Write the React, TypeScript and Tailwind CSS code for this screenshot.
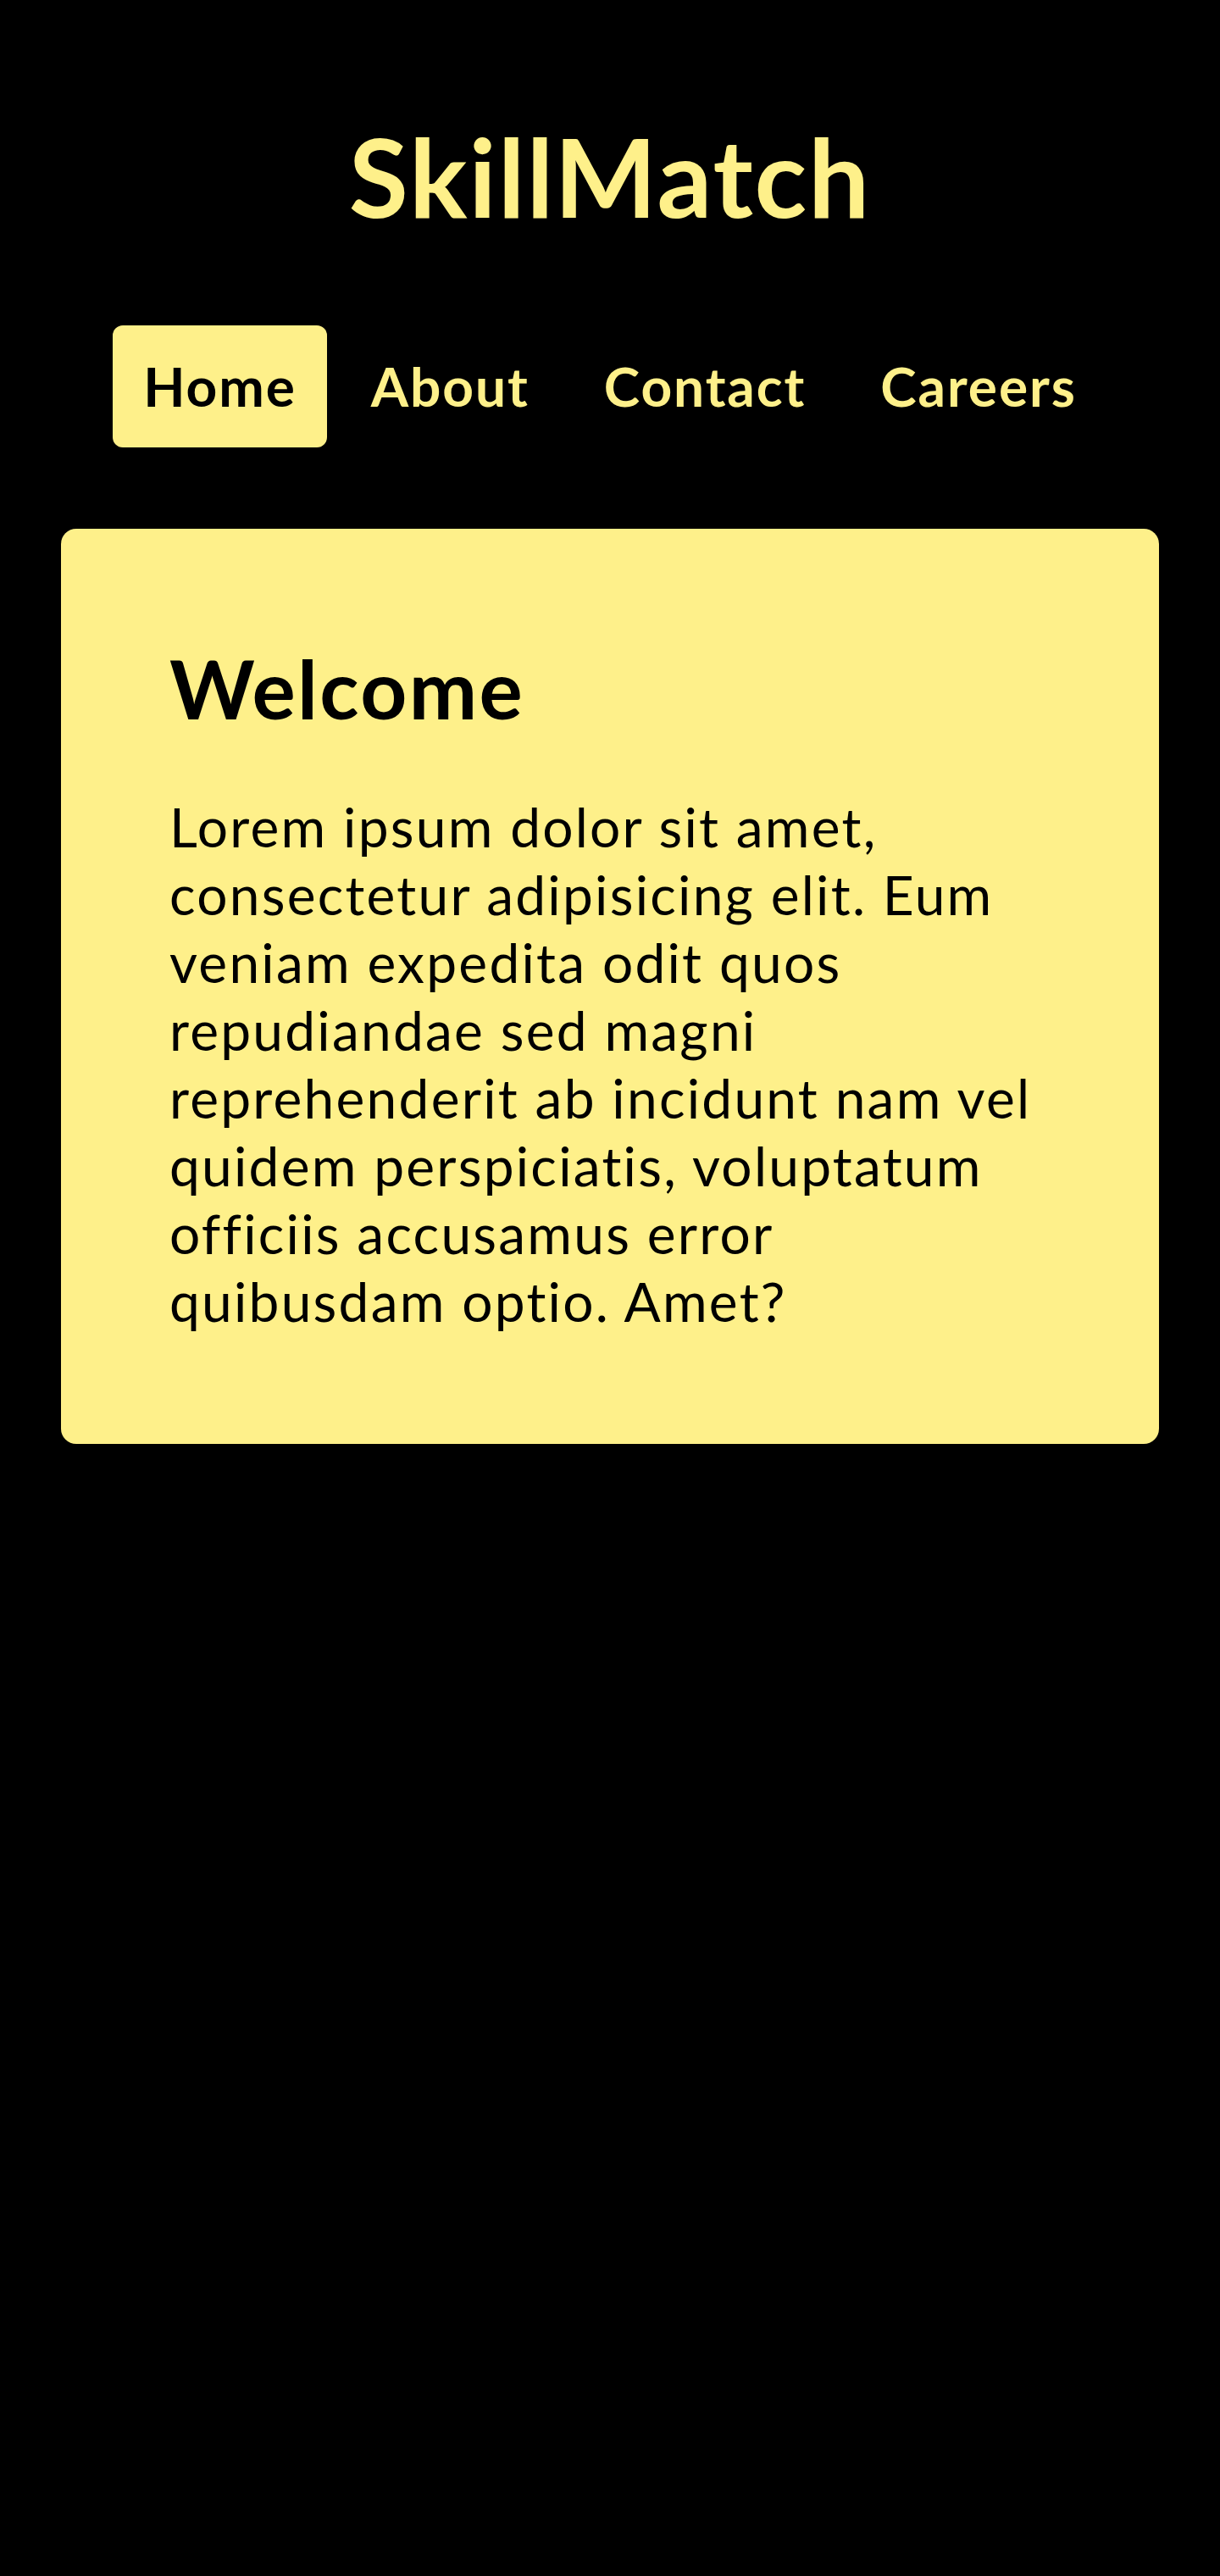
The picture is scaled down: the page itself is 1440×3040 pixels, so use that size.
const links = ["Home", "About", "Contact", "Careers"];

export default function App() {
  return (
    <div className="min-h-screen bg-black pt-[128px] font-['Lato',sans-serif] text-[#fef08a] [font-variant-ligatures:none]">
      <h1 className="text-center text-[128px] leading-[160px] font-bold tracking-[0.015em]">SkillMatch</h1>

      <nav className="mt-[96px] flex justify-center gap-4">
        {links.map((link) => (
          <a
            key={link}
            href="#"
            className={
              link === "Home"
                ? "rounded-xl bg-[#fef08a] px-9 py-8 text-[64px] leading-[80px] font-bold tracking-[0.03em] text-black"
                : "rounded-xl px-9 py-8 text-[64px] leading-[80px] font-bold tracking-[0.03em] text-[#fef08a]"
            }
          >
            {link}
          </a>
        ))}
      </nav>

      <main className="mx-[72px] mt-[96px] rounded-[18px] bg-[#fef08a] p-[128px] text-black">
        <h2 className="text-[96px] leading-[120px] font-bold tracking-[0.025em]">Welcome</h2>
        <p className="mt-16 text-[64px] leading-[80px] tracking-[0.035em]">
          Lorem ipsum dolor sit amet, consectetur adipisicing elit. Eum veniam expedita odit quos
          repudiandae sed magni reprehenderit ab incidunt nam vel quidem perspiciatis, voluptatum
          officiis accusamus error quibusdam optio. Amet?
        </p>
      </main>
    </div>
  );
}
